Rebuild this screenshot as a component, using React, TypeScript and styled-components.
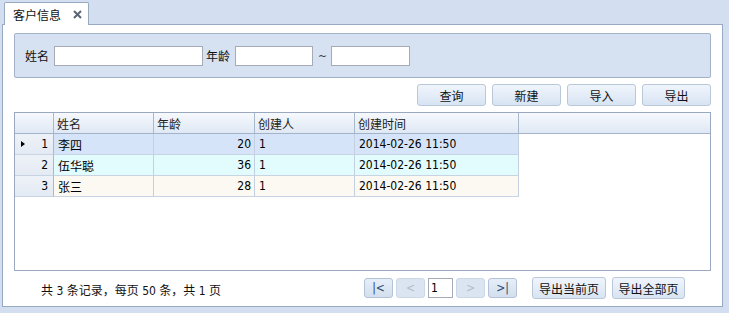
import React from "react";
import styled, { createGlobalStyle, css } from "styled-components";

const Global = createGlobalStyle`
  html, body { margin: 0; padding: 0; background: #d3dff0; }
  * { box-sizing: border-box; }
  body {
    font-family: "DejaVu Sans Condensed", "Liberation Sans", "Noto Sans CJK SC", sans-serif;
    font-size: 12px;
    color: #000;
  }
`;

const FONT = `"DejaVu Sans Condensed", "Liberation Sans", "Noto Sans CJK SC", sans-serif`;

const Page = styled.div`
  width: 729px;
  height: 313px;
  padding: 2px 6px 0 2px;
  background: #d3dff0;
`;

const TabStrip = styled.div`
  height: 22px;
  display: flex;
  align-items: flex-end;
  padding-left: 2px;
`;

const Tab = styled.div`
  width: 85px;
  height: 23px;
  margin-bottom: -1px;
  background: #fff;
  border: 1px solid #98a9c2;
  border-bottom: none;
  border-radius: 2px 2px 0 0;
  display: flex;
  align-items: center;
  padding-left: 8px;
  gap: 12px;
  position: relative;
  z-index: 1;
  font-size: 12px;
  color: #111;
`;

const CloseIcon = styled.svg`
  width: 9px;
  height: 9px;
`;

const Panel = styled.div`
  height: 283px;
  border: 1px solid #98a9c2;
  background: #fff;
  padding: 8px 11px 0 11px;
  display: flex;
  flex-direction: column;
`;

const Search = styled.div`
  height: 45px;
  background: #d6e2f2;
  border: 1px solid #a3b2c8;
  border-radius: 2px;
  display: flex;
  align-items: center;
  padding-left: 10px;
`;

const Label = styled.span<{ $ml?: number; $mr?: number }>`
  margin-left: ${(p) => p.$ml ?? 0}px;
  margin-right: ${(p) => p.$mr ?? 0}px;
  font-size: 12px;
  color: #111;
  white-space: nowrap;
`;

const TextInput = styled.input<{ $w: number }>`
  width: ${(p) => p.$w}px;
  height: 20px;
  border: 1px solid #a4abb6;
  background: #fff;
  padding: 0 3px;
  font: 12px ${FONT};
  outline: none;
`;

const Tilde = styled.span`
  margin: 0 4px 0 5px;
  font-size: 12px;
  color: #444;
`;

const ButtonRow = styled.div`
  display: flex;
  justify-content: flex-end;
  gap: 6px;
  margin-top: 6px;
  height: 22px;
`;

const btnBase = css`
  border: 1px solid #b9c7d9;
  border-radius: 3px;
  background: linear-gradient(#f0f5fc, #d8e4f3);
  font: 12px ${FONT};
  color: #111;
  display: flex;
  align-items: center;
  justify-content: center;
  padding: 0;
`;

const Button = styled.button<{ $w: number }>`
  ${btnBase};
  width: ${(p) => p.$w}px;
  height: 22px;
`;

const Grid = styled.div`
  margin-top: 6px;
  height: 159px;
  border: 1px solid #9aa9c0;
  display: flex;
  flex-direction: column;
  background: #fff;
`;

const HeaderRow = styled.div`
  height: 21px;
  display: flex;
  background: linear-gradient(#f6f9fd, #dfe8f4);
  border-bottom: 1px solid #a3b3ca;
`;

const HeaderCell = styled.div<{ $w: number; $last?: boolean }>`
  width: ${(p) => p.$w}px;
  flex: ${(p) => (p.$last ? "1" : "none")};
  border-right: ${(p) => (p.$last ? "none" : "1px solid #a8b8cd")};
  padding-left: 3px;
  display: flex;
  align-items: center;
  font-size: 12px;
  color: #222;
`;

const Row = styled.div`
  height: 21px;
  display: flex;
`;

const RowNum = styled.div`
  width: 39px;
  height: 21px;
  background: linear-gradient(#eef2f8, #e4eaf3);
  border-right: 1px solid #a8b8cd;
  border-bottom: 1px solid #c9d4e2;
  display: flex;
  align-items: center;
  justify-content: flex-end;
  padding-right: 5px;
  position: relative;
  font-size: 12px;
`;

const Arrow = styled.span`
  position: absolute;
  left: 6px;
  top: 7px;
  width: 0;
  height: 0;
  border-top: 3.5px solid transparent;
  border-bottom: 3.5px solid transparent;
  border-left: 4px solid #000;
`;

const Cell = styled.div<{ $w: number; $bg: string; $right?: boolean }>`
  width: ${(p) => p.$w}px;
  height: 21px;
  background: ${(p) => p.$bg};
  border-right: 1px solid #c3d0e1;
  border-bottom: 1px solid #c9d4e2;
  display: flex;
  align-items: center;
  justify-content: ${(p) => (p.$right ? "flex-end" : "flex-start")};
  padding: 0 3px 0 4px;
  font-size: 12px;
  white-space: nowrap;
`;

const Footer = styled.div`
  height: 34px;
  display: flex;
  align-items: center;
  padding-left: 27px;
  padding-right: 26px;
`;

const Summary = styled.span`
  font-size: 12px;
  color: #111;
  white-space: nowrap;
  margin-top: 2px;
`;

const Pager = styled.div`
  margin-left: auto;
  display: flex;
  align-items: center;
`;

const PageBtn = styled.button<{ $disabled?: boolean }>`
  ${btnBase};
  width: 29px;
  height: 20px;
  margin-right: 3px;
  color: #2b4670;
  background: linear-gradient(#e6eef8, #d3dfee);
  border-color: #b3c2d6;
  ${(p) =>
    p.$disabled &&
    css`
      color: #aebcd0;
      background: #dae5f1;
      border-color: #ccd8e6;
    `}
`;

const PageInput = styled.input`
  width: 25px;
  height: 20px;
  margin-right: 3px;
  border: 1px solid #a4abb6;
  font: 12px ${FONT};
  padding: 0 2px;
  outline: none;
`;

const ExportBtn = styled(Button)<{ $gap?: number }>`
  margin-left: ${(p) => p.$gap ?? 6}px;
`;

type R = { name: string; age: number; bg: string };

const rows: R[] = [
  { name: "李四", age: 20, bg: "#d5e4f8" },
  { name: "伍华聪", age: 36, bg: "#e2fbfc" },
  { name: "张三", age: 28, bg: "#fbf9f1" },
];

export default function App() {
  return (
    <>
      <Global />
      <Page>
        <TabStrip>
          <Tab>
            <span>客户信息</span>
            <CloseIcon viewBox="0 0 9 9">
              <path d="M1 1 L8 8 M8 1 L1 8" stroke="#5b6675" strokeWidth="2" />
            </CloseIcon>
          </Tab>
        </TabStrip>
        <Panel>
          <Search>
            <Label $mr={5}>姓名</Label>
            <TextInput $w={149} />
            <Label $ml={3} $mr={5}>年龄</Label>
            <TextInput $w={78} />
            <Tilde>~</Tilde>
            <TextInput $w={79} />
          </Search>
          <ButtonRow>
            <Button $w={69}>查询</Button>
            <Button $w={69}>新建</Button>
            <Button $w={69}>导入</Button>
            <Button $w={69}>导出</Button>
          </ButtonRow>
          <Grid>
            <HeaderRow>
              <HeaderCell $w={39} />
              <HeaderCell $w={100}>姓名</HeaderCell>
              <HeaderCell $w={101}>年龄</HeaderCell>
              <HeaderCell $w={100}>创建人</HeaderCell>
              <HeaderCell $w={164}>创建时间</HeaderCell>
              <HeaderCell $w={0} $last />
            </HeaderRow>
            {rows.map((r, i) => (
              <Row key={i}>
                <RowNum>
                  {i === 0 && <Arrow />}
                  {i + 1}
                </RowNum>
                <Cell $w={100} $bg={r.bg}>{r.name}</Cell>
                <Cell $w={101} $bg={r.bg} $right>{r.age}</Cell>
                <Cell $w={100} $bg={r.bg}>1</Cell>
                <Cell $w={164} $bg={r.bg}>2014-02-26 11:50</Cell>
              </Row>
            ))}
          </Grid>
          <Footer>
            <Summary>共 3 条记录，每页 50 条，共 1 页</Summary>
            <Pager>
              <PageBtn>|&lt;</PageBtn>
              <PageBtn $disabled>&lt;</PageBtn>
              <PageInput defaultValue="1" />
              <PageBtn $disabled>&gt;</PageBtn>
              <PageBtn>&gt;|</PageBtn>
              <ExportBtn $w={74} $gap={12}>导出当前页</ExportBtn>
              <ExportBtn $w={73}>导出全部页</ExportBtn>
            </Pager>
          </Footer>
        </Panel>
      </Page>
    </>
  );
}
